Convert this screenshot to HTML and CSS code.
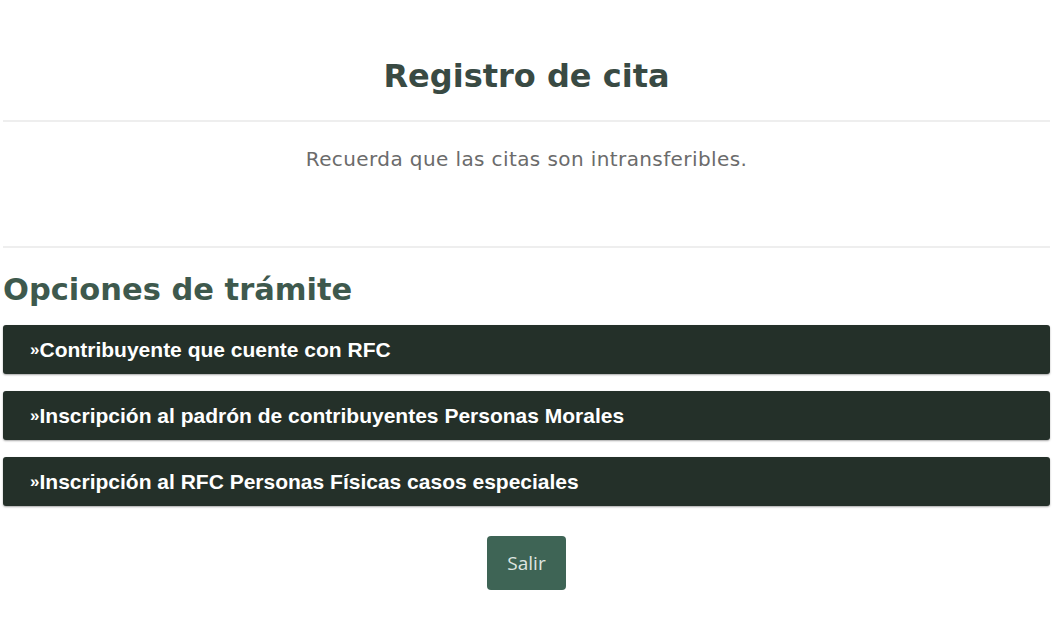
FILE: index.html
```html
<!DOCTYPE html>
<html lang="es">
<head>
  <meta charset="UTF-8">
  <title>Registro de cita</title>
  <link rel="stylesheet" href="styles.css">
</head>
<body>
  <main class="page">
    <h1 class="title">Registro de cita</h1>
    <hr class="rule">
    <p class="notice">Recuerda que las citas son intransferibles.</p>
    <hr class="rule">

    <!-- Lista de trámites -->
    <section class="options">
      <h2 class="options-title">Opciones de trámite</h2>
      <a class="option" href="#"><span class="arrow">&raquo;</span>Contribuyente que cuente con RFC</a>
      <a class="option" href="#"><span class="arrow">&raquo;</span>Inscripción al padrón de contribuyentes Personas Morales</a>
      <a class="option" href="#"><span class="arrow">&raquo;</span>Inscripción al RFC Personas Físicas casos especiales</a>
    </section>

    <div class="actions">
      <button class="btn-exit">Salir</button>
    </div>
  </main>
</body>
</html>
```

FILE: styles.css
```css
body {
  margin: 0;
  background: #fff;
  font-family: "DejaVu Sans", sans-serif;
}

.page {
  padding: 0 12px 0 3px;
}

.title {
  margin: 0;
  padding-top: 54px;
  height: 66px;
  text-align: center;
  font-weight: 700;
  font-size: 32px;
  line-height: 44px;
  color: #394a43;
}

.rule {
  margin: 0;
  border: 0;
  border-top: 2px solid #eeeeee;
}

.notice {
  margin: 0;
  padding: 25px 0 0;
  height: 99px;
  text-align: center;
  font-size: 20px;
  line-height: 24px;
  letter-spacing: 0.4px;
  color: #6b6b6b;
}

/* ===== Opciones ===== */
.options {
  display: flex;
  flex-direction: column;
  gap: 17px;
}

.options-title {
  margin: 24px 0 0;
  font-weight: 700;
  font-size: 30.5px;
  line-height: 36px;
  color: #3e594d;
}

.option {
  display: block;
  height: 49px;
  padding-left: 27px;
  background: #243029;
  border-radius: 3px;
  box-shadow: 0 1px 2px rgba(0, 0, 0, 0.35);
  color: #fff;
  font-family: "Liberation Sans", Arial, sans-serif;
  font-weight: 700;
  font-size: 21px;
  line-height: 49px;
  text-decoration: none;
}

.arrow {
  font-size: 17px;
  vertical-align: 2px;
}

.actions {
  display: flex;
  justify-content: center;
  padding-top: 30px;
}

.btn-exit {
  width: 79px;
  height: 54px;
  border: 0;
  border-radius: 4px;
  background: #3e6455;
  color: #dfe6e2;
  font-family: "Open Sans", sans-serif;
  font-size: 19px;
}
```
